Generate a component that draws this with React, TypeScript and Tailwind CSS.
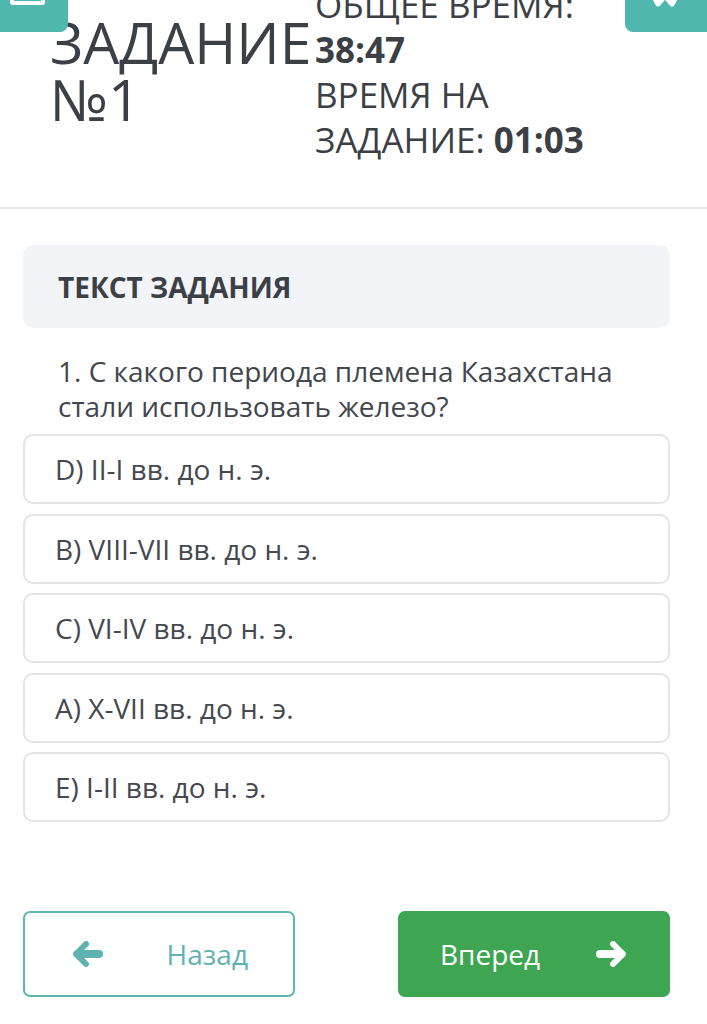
import React from "react";

const options = [
  "D) II-I вв. до н. э.",
  "B) VIII-VII вв. до н. э.",
  "C) VI-IV вв. до н. э.",
  "A) X-VII вв. до н. э.",
  "E) I-II вв. до н. э.",
];

function Arrow({ dir }: { dir: "left" | "right" }) {
  return (
    <svg
      width="30"
      height="26"
      viewBox="0 0 30 26"
      className={dir === "right" ? "rotate-180" : ""}
    >
      <path
        d="M13 3 L3 13 L13 23"
        fill="none"
        stroke="currentColor"
        strokeWidth="6"
        strokeLinecap="round"
        strokeLinejoin="round"
      />
      <path d="M5 13 H26" fill="none" stroke="currentColor" strokeWidth="8" strokeLinecap="round" />
    </svg>
  );
}

export default function App() {
  return (
    <div className="relative w-[707px] h-[1024px] overflow-hidden bg-white font-['Open_Sans',sans-serif] text-[#3b3f46]">
      {/* top overlay buttons */}
      <div className="absolute left-0 top-0 z-10 h-[32px] w-[68px] rounded-br-[8px] bg-[#4fb7ad]">
        <div className="absolute left-[10px] top-[-20px] h-[25px] w-[35px] rounded-[3px] border-[4px] border-white" />
      </div>
      <div className="absolute right-0 top-0 z-10 h-[32px] w-[82px] rounded-bl-[8px] bg-[#4fb7ad]">
        <svg className="absolute left-[24px] top-[-10px]" width="32" height="18" viewBox="0 0 32 18">
          <path d="M2 2 L9 14 L16 6 L23 14 L30 2" fill="none" stroke="white" strokeWidth="5" strokeLinejoin="round" strokeLinecap="round" />
        </svg>
      </div>

      {/* header */}
      <header className="flex h-[209px] items-start border-b-2 border-[#e7e7e7] pl-[50px]">
        <div className="mt-[14px] w-[265px] shrink-0 whitespace-nowrap text-[57px] leading-[57px]">
          ЗАДАНИЕ
          <br />
          №1
        </div>
        <div className="mt-[-18px] whitespace-nowrap text-[35px] leading-[45px]">
          <div>ОБЩЕЕ ВРЕМЯ:</div>
          <div className="font-bold">38:47</div>
          <div>ВРЕМЯ НА</div>
          <div>
            ЗАДАНИЕ: <span className="font-bold">01:03</span>
          </div>
        </div>
      </header>

      <main className="pl-[23px] pr-[37px] pt-[36px]">
        <div className="flex h-[83px] items-center rounded-[10px] bg-[#f3f4f7] pl-[35px]">
          <span className="text-[28px] font-bold">ТЕКСТ ЗАДАНИЯ</span>
        </div>

        <p className="mt-[26px] pl-[35px] text-[28px] leading-[35px] text-[#42464d]">
          1. С какого периода племена Казахстана
          <br />
          стали использовать железо?
        </p>

        <div className="mt-[10px] flex flex-col gap-[9.5px]">
          {options.map((o) => (
            <div
              key={o}
              className="flex h-[70px] items-center rounded-[10px] border-2 border-[#e4e4e4] pl-[30px] text-[28px] text-[#45484f]"
            >
              {o}
            </div>
          ))}
        </div>

        <div className="mt-[89px] flex justify-between">
          <button className="flex h-[86px] w-[272px] items-center justify-between rounded-[7px] border-2 border-[#5db6b0] pl-[48px] pr-[45px] text-[28px] text-[#5fb3ae]">
            <Arrow dir="left" />
            <span>Назад</span>
          </button>
          <button className="flex h-[86px] w-[272px] items-center justify-between rounded-[7px] bg-[#3ea553] pl-[42px] pr-[44px] text-[28px] text-white">
            <span>Вперед</span>
            <Arrow dir="right" />
          </button>
        </div>
      </main>
    </div>
  );
}
